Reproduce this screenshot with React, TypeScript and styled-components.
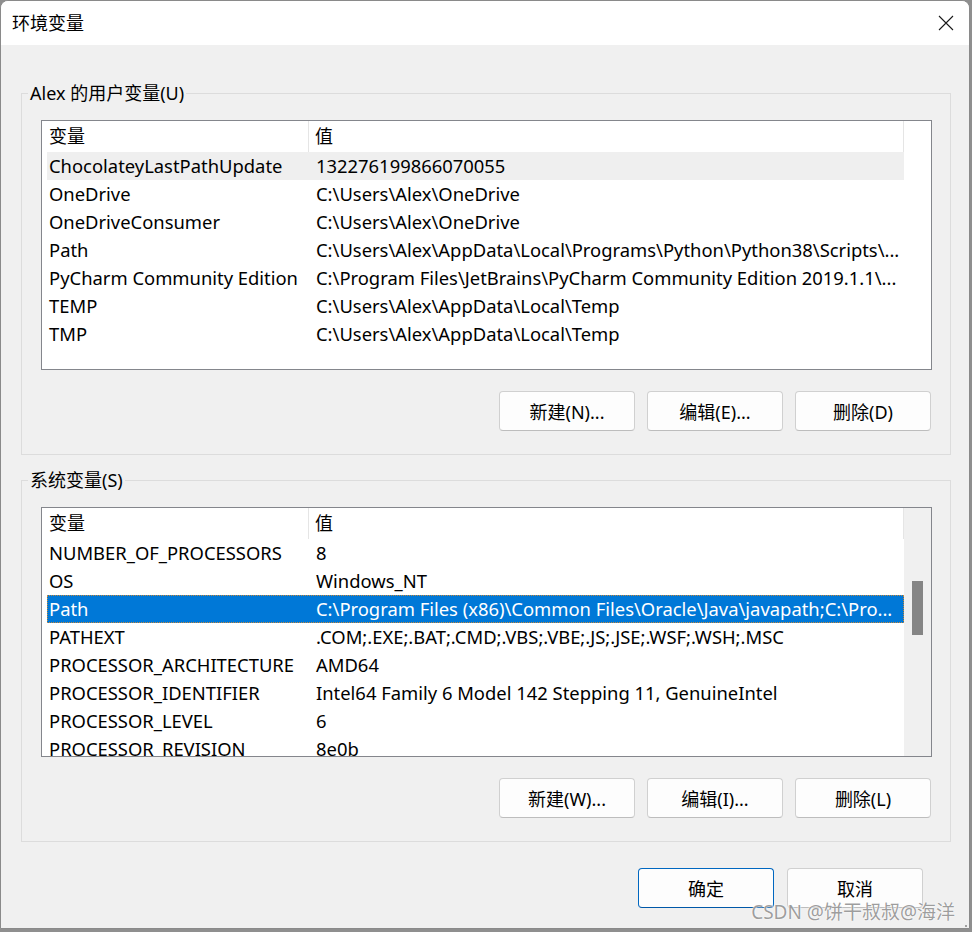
import React from 'react';
import styled, { createGlobalStyle } from 'styled-components';

type Row = { name: string; value: string; hover?: boolean; selected?: boolean };

const FONT = `"Noto Sans", "Noto Sans CJK SC", sans-serif`;

const userVars: Row[] = [
  { name: 'ChocolateyLastPathUpdate', value: '132276199866070055', hover: true },
  { name: 'OneDrive', value: 'C:\\Users\\Alex\\OneDrive' },
  { name: 'OneDriveConsumer', value: 'C:\\Users\\Alex\\OneDrive' },
  { name: 'Path', value: 'C:\\Users\\Alex\\AppData\\Local\\Programs\\Python\\Python38\\Scripts\\...' },
  { name: 'PyCharm Community Edition', value: 'C:\\Program Files\\JetBrains\\PyCharm Community Edition 2019.1.1\\...' },
  { name: 'TEMP', value: 'C:\\Users\\Alex\\AppData\\Local\\Temp' },
  { name: 'TMP', value: 'C:\\Users\\Alex\\AppData\\Local\\Temp' },
];

const systemVars: Row[] = [
  { name: 'NUMBER_OF_PROCESSORS', value: '8' },
  { name: 'OS', value: 'Windows_NT' },
  { name: 'Path', value: 'C:\\Program Files (x86)\\Common Files\\Oracle\\Java\\javapath;C:\\Pro...', selected: true },
  { name: 'PATHEXT', value: '.COM;.EXE;.BAT;.CMD;.VBS;.VBE;.JS;.JSE;.WSF;.WSH;.MSC' },
  { name: 'PROCESSOR_ARCHITECTURE', value: 'AMD64' },
  { name: 'PROCESSOR_IDENTIFIER', value: 'Intel64 Family 6 Model 142 Stepping 11, GenuineIntel' },
  { name: 'PROCESSOR_LEVEL', value: '6' },
  { name: 'PROCESSOR_REVISION', value: '8e0b' },
];

const VarList: React.FC<{ rows: Row[]; scroll?: { top: number; size: number } }> = ({ rows, scroll }) => (
  <ListBox>
    <ListContent>
      <Header>
        <HeaderCell $first>变量</HeaderCell>
        <HeaderCell>值</HeaderCell>
      </Header>
      {rows.map((r) => (
        <ListRow key={r.name} $hover={r.hover} $selected={r.selected}>
          <NameCell>{r.name}</NameCell>
          <ValueCell>{r.value}</ValueCell>
        </ListRow>
      ))}
    </ListContent>
    <ScrollTrack $visible={!!scroll}>
      {scroll && <ScrollThumb style={{ marginTop: scroll.top, height: scroll.size }} />}
    </ScrollTrack>
  </ListBox>
);

const App: React.FC = () => {
  return (
    <>
      <GlobalStyle />
      <Window>
        <TitleBar>
          <Title>环境变量</Title>
          <CloseBox>
            <svg width="16" height="16" viewBox="0 0 16 16">
              <path d="M1 1 L15 15 M15 1 L1 15" stroke="#1a1a1a" strokeWidth="1.1" fill="none" />
            </svg>
          </CloseBox>
        </TitleBar>
        <Body>
          <Group>
            <Legend>Alex 的用户变量(U)</Legend>
            <VarList rows={userVars} />
            <ButtonRow>
              <Button>新建(N)...</Button>
              <Button>编辑(E)...</Button>
              <Button>删除(D)</Button>
            </ButtonRow>
          </Group>
          <Group $spaced>
            <Legend>系统变量(S)</Legend>
            <VarList rows={systemVars} scroll={{ top: 73, size: 54 }} />
            <ButtonRow>
              <Button>新建(W)...</Button>
              <Button>编辑(I)...</Button>
              <Button>删除(L)</Button>
            </ButtonRow>
          </Group>
          <Footer>
            <Button $primary>确定</Button>
            <Button>取消</Button>
          </Footer>
        </Body>
        <Watermark>CSDN @饼干叔叔@海洋</Watermark>
        <Grip>
          <svg width="12" height="12" viewBox="0 0 12 12">
            {[
              [9, 3], [9, 6], [6, 6], [9, 9], [6, 9], [3, 9],
            ].map(([x, y]) => (
              <rect key={`${x}-${y}`} x={x} y={y} width="2" height="2" fill="#a0a0a0" />
            ))}
          </svg>
        </Grip>
      </Window>
    </>
  );
};

const GlobalStyle = createGlobalStyle`
  html, body {
    margin: 0;
    padding: 0;
    background: #8f8f8f;
  }
  body {
    font-family: ${FONT};
    font-size: 18px;
    color: #000;
  }
`;

const Window = styled.div`
  position: relative;
  box-sizing: border-box;
  width: 970px;
  height: 929px;
  border: 1px solid #8a8a8a;
  border-radius: 8px 8px 0 0;
  background: #f0f0f0;
  overflow: hidden;
  display: flex;
  flex-direction: column;
`;

const TitleBar = styled.div`
  height: 44px;
  flex: none;
  background: #fff;
  display: flex;
  align-items: center;
  justify-content: space-between;
  padding-left: 11px;
`;

const Title = styled.div`
  font-size: 18px;
  line-height: 24px;
`;

const CloseBox = styled.div`
  width: 46px;
  height: 44px;
  display: flex;
  align-items: center;
  justify-content: center;
`;

const Body = styled.div`
  display: flex;
  flex-direction: column;
  padding: 36px 18px 0 20px;
`;

const Group = styled.fieldset<{ $spaced?: boolean }>`
  margin: ${(p) => (p.$spaced ? '13px' : '0')} 0 0 0;
  padding: 15px 18px 23px 19px;
  border: 1px solid #dcdcdc;
  min-width: 0;
`;

const Legend = styled.legend`
  padding: 0 2px;
  margin-left: -13px;
  font-size: 18px;
  line-height: 24px;
`;

const ListBox = styled.div`
  height: 250px;
  box-sizing: border-box;
  border: 1px solid #84868c;
  background: #fff;
  display: flex;
  overflow: hidden;
  font-size: 18.4px;
`;

const ListContent = styled.div`
  width: 862px;
  flex: none;
  display: flex;
  flex-direction: column;
`;

const Header = styled.div`
  height: 31px;
  flex: none;
  display: flex;
  font-size: 18px;
`;

const HeaderCell = styled.div<{ $first?: boolean }>`
  box-sizing: border-box;
  ${(p) => (p.$first ? 'width: 267px; padding-left: 7px;' : 'flex: 1; padding-left: 6px;')}
  border-right: 1px solid #e5e5e5;
  line-height: 31px;
`;

const ListRow = styled.div<{ $hover?: boolean; $selected?: boolean }>`
  height: 28px;
  flex: none;
  margin-left: 5px;
  box-sizing: border-box;
  display: grid;
  grid-template-columns: 262px 1fr;
  line-height: 28px;
  white-space: nowrap;
  background: ${(p) => (p.$selected ? '#0078d7' : p.$hover ? '#efefef' : 'transparent')};
  color: ${(p) => (p.$selected ? '#fff' : '#000')};
  outline: ${(p) => (p.$selected ? '1px dotted #c8883a' : 'none')};
  outline-offset: -1px;
`;

const NameCell = styled.div`
  padding-left: 2px;
  overflow: hidden;
`;

const ValueCell = styled.div`
  padding-left: 7px;
  overflow: hidden;
`;

const ScrollTrack = styled.div<{ $visible: boolean }>`
  flex: 1;
  display: flex;
  flex-direction: column;
  padding-left: 8px;
  background: ${(p) => (p.$visible ? '#f0f0f0' : '#fff')};
`;

const ScrollThumb = styled.div`
  width: 11px;
  background: #858585;
`;

const ButtonRow = styled.div`
  display: flex;
  justify-content: flex-end;
  gap: 12px;
  margin-top: 21px;
  padding-right: 1px;
`;

const Button = styled.button<{ $primary?: boolean }>`
  width: 136px;
  height: 40px;
  box-sizing: border-box;
  border-radius: 4px;
  font-family: ${FONT};
  font-size: 18px;
  color: #000;
  background: #fdfdfd;
  border: 1px solid ${(p) => (p.$primary ? '#0067c0' : '#d0d0d0')};
  border-bottom-color: ${(p) => (p.$primary ? '#0058a8' : '#bdbdbd')};
  padding: 0;
`;

const Footer = styled.div`
  display: flex;
  justify-content: flex-end;
  gap: 13px;
  margin-top: 26px;
  padding-right: 28px;
`;

const Watermark = styled.div`
  position: absolute;
  right: 14px;
  bottom: 3px;
  font-size: 19px;
  line-height: 26px;
  color: rgba(125, 125, 125, 0.75);
  text-shadow: 0 0 1px #fff, 0 0 2px #fff;
  pointer-events: none;
`;

const Grip = styled.div`
  position: absolute;
  right: 1px;
  bottom: 1px;
  width: 12px;
  height: 12px;
`;

export default App;
